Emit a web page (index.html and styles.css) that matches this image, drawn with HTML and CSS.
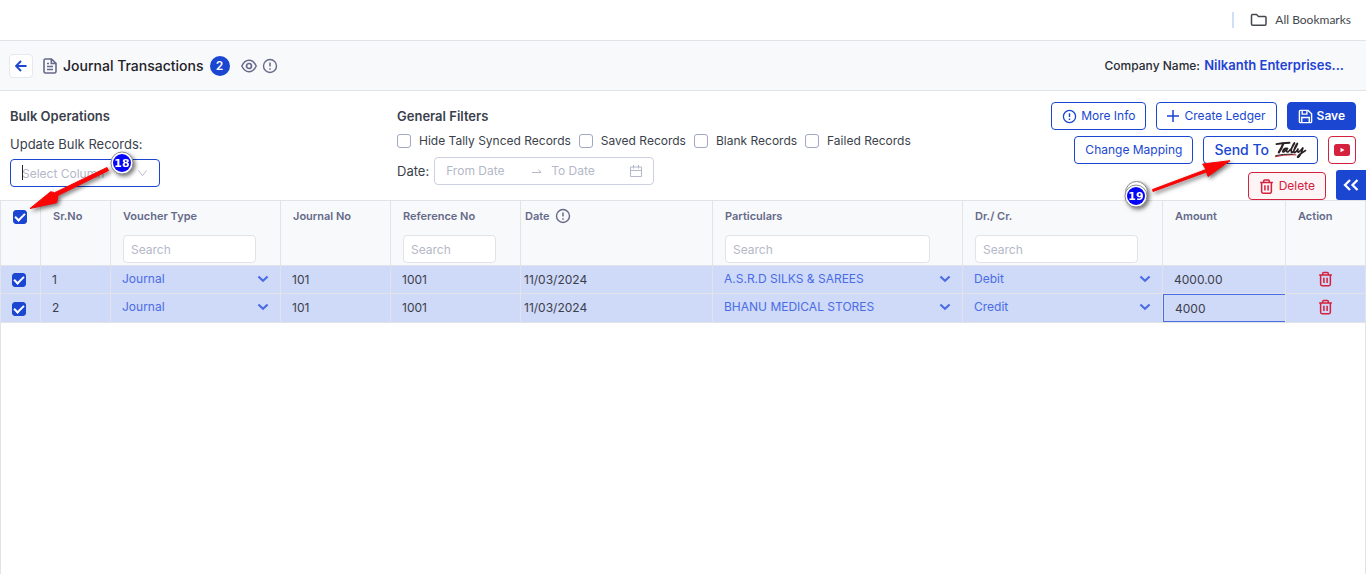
FILE: index.html
```html
<!DOCTYPE html>
<html lang="en">
<head>
<meta charset="utf-8">
<title>Journal Transactions</title>
<link rel="stylesheet" href="styles.css">
</head>
<body>
<svg class="defs" aria-hidden="true">
  <symbol id="alert" viewBox="0 0 16 16"><circle cx="8" cy="8" r="6.5" fill="none" stroke="currentColor" stroke-width="1.4"/><path d="M8 4.6v4M8 10.2v1.5" stroke="currentColor" stroke-width="1.5" fill="none"/></symbol>
  <symbol id="chevron" viewBox="0 0 12 8"><path d="M1.4 1.4 6 5.8l4.600-4.400" fill="none" stroke="currentColor" stroke-width="2.100"/></symbol>
  <symbol id="trash" viewBox="0 0 16 16"><path d="M1.200 3.700h13.600M5 3.500V2.200q0-1.200 1-1.200h4q1 0 1 1.200v1.300M2.800 4v9.600q0 1.500 1.500 1.500h7.400q1.500 0 1.500-1.500V4M6.300 6.600v5.600M9.700 6.600v5.600" fill="none" stroke="currentColor" stroke-width="1.600"/></symbol>
</svg>

<div class="browser-bar">
  <span class="browser-divider"></span>
  <svg class="folder" viewBox="0 0 18 14"><path d="M1.500 11V2.500q0-1 1-1h4l2 2h6.500q1 0 1 1V11q0 1.200-1 1.200H2.500q-1 0-1-1.200Z" fill="none" stroke="currentColor" stroke-width="1.500"/></svg>
  <span>All Bookmarks</span>
</div>

<header class="page-header">
  <button class="back" type="button" aria-label="Back"><svg viewBox="0 0 12 12"><path d="M11.500 6H1.500M6 1 1 6l5 5" fill="none" stroke="currentColor" stroke-width="1.900"/></svg></button>
  <svg class="doc" viewBox="0 0 14 16"><path d="M2.500 1h6L13 5.300v8.200q0 1.500-1.500 1.500h-9Q1 15 1 13.500v-11Q1 1 2.500 1ZM8.300 1v4.500H13M4 5.500h2M4 8.500h6M4 11.500h6" fill="none" stroke="currentColor" stroke-width="1.600"/></svg>
  <h1>Journal Transactions</h1>
  <span class="count">2</span>
  <svg class="eye" viewBox="0 0 16 14"><path d="M.8 7Q3.500 1.300 8 1.300T15.200 7Q12.500 12.700 8 12.700T.8 7Z" fill="none" stroke="currentColor" stroke-width="1.500"/><circle cx="8" cy="7" r="2.500" fill="none" stroke="currentColor" stroke-width="1.700"/></svg>
  <svg class="info"><use href="#alert"/></svg>
  <p class="company">Company Name: <a href="#">Nilkanth Enterprises...</a></p>
</header>

<section class="toolbar">
  <div class="bulk">
    <h2>Bulk Operations</h2>
    <label for="column">Update Bulk Records:</label>
    <div class="combo">
      <input id="column" type="text" role="combobox" placeholder="Select Column">
      <span class="caret"></span>
      <svg viewBox="0 0 12 8"><path d="m1.500 1 4.500 6 4.500-6" fill="none" stroke="currentColor"/></svg>
    </div>
    <svg class="note note-select" viewBox="0 0 112 70">
      <path class="arrow" d="M80.500 20.500 30 45.500 28.700 52.700 2 58.500l20.700-16.800 4 1L79 17.500Z"/>
      <circle class="ring" cx="94" cy="13" r="11"/><circle class="disc" cx="94" cy="13" r="9"/>
      <text x="94" y="17">18</text>
    </svg>
  </div>

  <div class="filters">
    <h2>General Filters</h2>
    <div class="checks">
      <label><input type="checkbox">Hide Tally Synced Records</label>
      <label><input type="checkbox">Saved Records</label>
      <label><input type="checkbox">Blank Records</label>
      <label><input type="checkbox">Failed Records</label>
    </div>
    <div class="date-row">
      <label for="from">Date:</label>
      <div class="range">
        <input id="from" class="from" type="text" placeholder="From Date">
        <svg class="to-arrow" viewBox="0 0 10 6"><path d="M0 4.500h9L6.500 1.500" fill="none" stroke="currentColor"/></svg>
        <input type="text" placeholder="To Date" aria-label="To Date">
        <svg class="calendar" viewBox="0 0 12 12"><path d="M.5 2h11v9.500H.5ZM.5 5.500h11M3.500 0v3.500M8.500 0v3.500" fill="none" stroke="currentColor"/></svg>
      </div>
    </div>
  </div>

  <div class="actions">
    <div class="action-row">
      <button class="btn" type="button"><svg><use href="#alert"/></svg>More Info</button>
      <button class="btn plus" type="button"><svg viewBox="0 0 12 12"><path d="M6 0v12M0 6h12" stroke="currentColor" stroke-width="1.500"/></svg>Create Ledger</button>
      <button class="btn solid" type="button"><svg viewBox="0 0 16 16"><path d="M2.500 1.500h8.300l3.700 3.700v8.300q0 1-1 1h-11q-1 0-1-1v-11q0-1 1-1ZM4.500 1.500v4h5v-4M4 14.500V9h8v5.500" fill="none" stroke="currentColor" stroke-width="1.500"/></svg>Save</button>
    </div>
    <div class="action-row">
      <button class="btn" type="button">Change Mapping</button>
      <button class="btn send" type="button">Send To
        <svg class="tally" viewBox="0 0 34 18" role="img" aria-label="Tally"><g fill="none" stroke="#2b2024" stroke-linecap="round"><path d="M2.500 3Q8 2 16 1.500" stroke-width="1.900"/><path d="M9.500 2.500Q8 7 5 11.500" stroke-width="2.300"/><path d="M14 7.500Q10 6.500 9 10.500q.5 2 4-2.500l1-1q-2.500 4.500.5 4Q18.500 8 21 2.500q.5-2-1 .5-3 6-2 8.500 2 .5 6-8.500.5-2-1 .5-3 5.500-2.500 8 1.500 1 4.500-4-1.500 4.500.5 3.500 2-1 4.500-4.500Q27.500 15 25 16.500q-2 .5 1.500-3l6-4" stroke-width="1.600"/></g><path d="M1 16Q11 13.500 23 14" fill="none" stroke="#c8283c" stroke-width="1.200"/><path d="M1.500 14.800Q9 13 20 13.300" fill="none" stroke="#2b2024"/></svg>
      </button>
      <button class="btn danger video" type="button" aria-label="Video"><svg viewBox="0 0 16 12"><rect width="16" height="12" rx="2.500" fill="currentColor"/><path d="M6.500 3.700v4.600L10.500 6Z" fill="#fff"/></svg></button>
    </div>
    <div class="action-row last">
      <button class="btn danger delete" type="button"><svg><use href="#trash"/></svg>Delete</button>
      <button class="collapse" type="button" aria-label="Collapse"><svg viewBox="0 0 16 12"><path d="M7 1 2 6l5 5M14.500 1l-5 5 5 5" fill="none" stroke="currentColor" stroke-width="2.300"/></svg></button>
    </div>
    <svg class="note note-send" viewBox="0 0 120 60">
      <path class="arrow" d="M33 43.500 86.500 24l1.500 4.500L110 12.700 82.700 16l3.300 5.500L32.500 41.500Z"/>
      <circle class="ring" cx="16.500" cy="44.500" r="11"/>
      <circle class="ring" cx="16" cy="48" r="11"/><circle class="disc" cx="16" cy="48" r="9"/>
      <text x="16" y="52">19</text>
    </svg>
  </div>
</section>

<main class="grid-wrap">
  <table>
    <colgroup>
      <col class="c-check"><col class="c-sr"><col class="c-voucher"><col class="c-journal"><col class="c-ref"><col class="c-date"><col><col class="c-drcr"><col class="c-amount"><col class="c-action">
    </colgroup>
    <thead>
      <tr>
        <th class="pick"><input type="checkbox" checked aria-label="Select all"></th>
        <th>Sr.No</th>
        <th>Voucher Type<input class="search" type="text" placeholder="Search" aria-label="Search voucher type"></th>
        <th>Journal No</th>
        <th>Reference No<input class="search" type="text" placeholder="Search" aria-label="Search reference no"></th>
        <th class="date"><span>Date<svg><use href="#alert"/></svg></span></th>
        <th class="particulars">Particulars<input class="search" type="text" placeholder="Search" aria-label="Search particulars"></th>
        <th>Dr./ Cr.<input class="search" type="text" placeholder="Search" aria-label="Search debit or credit"></th>
        <th>Amount</th>
        <th>Action</th>
      </tr>
    </thead>
    <tbody>
      <tr>
        <td class="pick"><input type="checkbox" checked aria-label="Select row 1"></td>
        <td>1</td>
        <td><div class="cell-select"><select aria-label="Voucher type"><option>Journal</option></select><svg><use href="#chevron"/></svg></div></td>
        <td>101</td>
        <td>1001</td>
        <td class="date">11/03/2024</td>
        <td><div class="cell-select"><select aria-label="Particulars"><option>A.S.R.D SILKS &amp; SAREES</option></select><svg><use href="#chevron"/></svg></div></td>
        <td><div class="cell-select"><select aria-label="Debit or credit"><option>Debit</option></select><svg><use href="#chevron"/></svg></div></td>
        <td>4000.00</td>
        <td class="act"><button type="button" aria-label="Delete row 1"><svg><use href="#trash"/></svg></button></td>
      </tr>
      <tr>
        <td class="pick"><input type="checkbox" checked aria-label="Select row 2"></td>
        <td>2</td>
        <td><div class="cell-select"><select aria-label="Voucher type"><option>Journal</option></select><svg><use href="#chevron"/></svg></div></td>
        <td>101</td>
        <td>1001</td>
        <td class="date">11/03/2024</td>
        <td><div class="cell-select"><select aria-label="Particulars"><option>BHANU MEDICAL STORES</option></select><svg><use href="#chevron"/></svg></div></td>
        <td><div class="cell-select"><select aria-label="Debit or credit"><option>Credit</option></select><svg><use href="#chevron"/></svg></div></td>
        <td class="editing"><input type="text" value="4000" aria-label="Amount"></td>
        <td class="act"><button type="button" aria-label="Delete row 2"><svg><use href="#trash"/></svg></button></td>
      </tr>
    </tbody>
  </table>
</main>
</body>
</html>
```
FILE: styles.css
```css
:root {
  --blue: #1a46d2;
  --red: #d4213d;
  --line: #e1e3e8;
  --pale: #f8f9fb;
  --text: #3b3f4c;
  --muted: #656a89;
  --hint: #b4b8c8;
}
* { box-sizing: border-box; }
body {
  margin: 0;
  min-height: 100vh;
  display: flex;
  flex-direction: column;
  background: #fff;
  color: var(--text);
  font: 12px/20px Inter, "Liberation Sans", sans-serif;
}
button, input, select { font: inherit; color: inherit; }
button { cursor: pointer; }
svg { display: block; flex: none; }
.defs { position: absolute; width: 0; height: 0; }
::placeholder { color: var(--hint); opacity: 1; }

.browser-bar {
  height: 40px;
  display: flex;
  align-items: center;
  justify-content: flex-end;
  padding-right: 15px;
  color: #45484d;
  font: 12px/20px Lato, "Open Sans", sans-serif;
}
.browser-divider { width: 2px; height: 16px; margin-right: 16px; background: #cfdff8; }
.folder { width: 18px; height: 14px; margin-right: 7px; }

.page-header {
  display: flex;
  align-items: center;
  height: 51px;
  padding: 0 22px 0 9px;
  border-top: 1px solid var(--line);
  border-bottom: 1px solid var(--line);
  background: var(--pale);
  color: var(--muted);
}
.back {
  display: grid;
  place-items: center;
  width: 24px;
  height: 24px;
  margin-right: 10px;
  padding: 0;
  border: 1px solid #e6e8ee;
  border-radius: 4px;
  background: #fff;
  color: var(--blue);
}
.back svg { width: 12px; height: 12px; }
.doc { width: 14px; height: 16px; margin-right: 6px; }
h1 { margin: 0; color: #1f2229; font-size: 14px; font-weight: 500; }
.count {
  width: 20px;
  margin: 0 11px 0 6px;
  border-radius: 10px;
  background: var(--blue);
  color: #fff;
  font-weight: 600;
  text-align: center;
}
.eye { width: 16px; height: 14px; margin-right: 5px; }
.info { width: 16px; height: 16px; }
.company { margin: 0 0 0 auto; color: #292c34; font-weight: 500; }
.company a { margin-left: 1px; color: #1f43d3; font-size: 13px; font-weight: 600; text-decoration: none; }

.toolbar {
  display: grid;
  grid-template-columns: 387px 1fr auto;
  padding: 11px 0 0 10px;
}
h2 { margin: 0; font-size: 13px; font-weight: 600; line-height: 28px; }
.bulk { position: relative; }
.bulk label { display: block; font-size: 13px; line-height: 29px; }
.combo { position: relative; width: 150px; }
.combo input {
  display: block;
  width: 100%;
  height: 28px;
  padding: 0 30px 0 11px;
  border: 1px solid var(--blue);
  border-radius: 4px;
  background: #fff;
}
.caret { position: absolute; top: 6px; left: 12px; width: 1px; height: 15px; background: #222; }
.combo svg { position: absolute; top: 10px; right: 12px; width: 11px; height: 8px; color: var(--hint); }

.checks { display: flex; gap: 8px; line-height: 22px; }
.checks label { display: flex; align-items: center; gap: 8px; }
input[type="checkbox"] {
  appearance: none;
  display: block;
  flex: none;
  width: 14px;
  height: 14px;
  margin: 0;
  border: 1px solid #a2a7c4;
  border-radius: 3px;
  background: #fff;
}
input[type="checkbox"]:checked {
  border-color: var(--blue);
  background: var(--blue);
  display: grid;
  place-items: center;
}
input[type="checkbox"]:checked::before {
  content: "";
  width: 4px;
  height: 8px;
  margin-bottom: 2px;
  border: solid #fff;
  border-width: 0 2px 2px 0;
  transform: rotate(45deg);
}
.date-row { display: flex; align-items: center; gap: 5px; margin-top: 5px; }
.date-row label { font-size: 13px; }
.range {
  display: flex;
  align-items: center;
  width: 220px;
  height: 28px;
  padding: 0 11px;
  border: 1px solid #cdd0e0;
  border-radius: 4px;
  color: var(--hint);
}
.range input { min-width: 0; flex: 1; padding: 0; border: 0; background: none; }
.range .from { flex: 0 0 86px; }
.to-arrow { width: 10px; height: 6px; margin-right: 9px; }
.calendar { width: 12px; height: 12px; }

.actions { position: relative; }
.action-row {
  display: flex;
  justify-content: flex-end;
  gap: 10px;
  margin-bottom: 6px;
  padding-right: 10px;
}
.action-row.last { align-items: flex-end; margin: 0; padding: 0; }
.btn {
  display: flex;
  align-items: center;
  height: 28px;
  gap: 4px;
  padding: 0 10px;
  border: 1px solid var(--blue);
  border-radius: 4px;
  background: #fff;
  color: var(--blue);
}
.btn svg { width: 15px; height: 15px; }
.btn.plus { gap: 5px; }
.btn.plus svg { width: 12px; height: 12px; }
.btn.solid { background: var(--blue); color: #fff; font-weight: 600; }
.btn.send { gap: 5px; font-size: 14px; font-weight: 500; }
.btn .tally { width: 33px; height: 18px; }
.btn.danger { border-color: var(--red); color: var(--red); }
.btn.video { width: 28px; padding: 0 5px; }
.btn.video svg { width: 16px; height: 12px; }
.btn.delete { gap: 5px; background: #fdf4f6; }
.collapse {
  display: grid;
  place-items: center;
  width: 30px;
  height: 30px;
  padding: 0;
  border: 0;
  border-radius: 3px 0 0 3px;
  background: var(--blue);
  color: #fff;
}
.collapse svg { width: 16px; height: 12px; }

.note { position: absolute; z-index: 1; pointer-events: none; filter: drop-shadow(2px 2px 2px rgba(0, 0, 0, 0.55)); }
.note-select { top: 48px; left: 18px; width: 112px; height: 70px; }
.note-send { top: 46px; right: 126px; width: 120px; height: 60px; }
.arrow { fill: #fa0505; stroke: #fa0505; stroke-width: 1; }
.ring { fill: #fff; stroke: #8b8b8b; stroke-width: 1; }
.disc { fill: #0505fa; }
.note text { fill: #fff; font: bold 11px "DejaVu Sans", sans-serif; text-anchor: middle; }

.grid-wrap { flex: 1; border: solid var(--line); border-width: 1px 1px 0; }
table { width: 100%; border-collapse: separate; border-spacing: 0; table-layout: fixed; }
.c-check { width: 40px; }
.c-sr { width: 70px; }
.c-voucher { width: 170px; }
.c-journal { width: 110px; }
.c-ref { width: 130px; }
.c-date { width: 192px; }
.c-drcr { width: 200px; }
.c-amount { width: 123px; }
.c-action { width: 79px; }
th, td { border: solid var(--line); border-width: 0 1px 1px 0; text-align: left; }
th:last-child, td:last-child { border-right: 0; }
th {
  height: 65px;
  padding: 5px 24px 2px 12px;
  background: var(--pale);
  color: var(--muted);
  font-size: 11px;
  font-weight: 600;
  vertical-align: top;
  white-space: nowrap;
}
th.date { padding-left: 4px; }
th.date span { display: flex; align-items: center; gap: 5px; }
th.date svg { width: 16px; height: 16px; }
th.particulars { padding-right: 32px; }
th.pick { padding: 9px 12px; }
.search {
  display: block;
  width: 100%;
  height: 28px;
  margin-top: 9px;
  padding: 0 7px;
  border: 1px solid var(--line);
  border-radius: 4px;
  background: #fff;
  font-size: 12px;
  font-weight: 400;
}
td { height: 28px; padding: 0 11px; background: #cfd9f8; }
td.date { padding-left: 3px; }
td.pick { padding: 1px 11px 0; }
.cell-select { display: grid; grid-template-columns: 1fr 12px; align-items: center; padding-bottom: 2px; color: #4a6de5; }
.cell-select select {
  grid-area: 1 / 1 / 2 / 3;
  width: 100%;
  height: 20px;
  padding: 0;
  border: 0;
  appearance: none;
  background: none;
}
.cell-select svg { grid-area: 1 / 2; width: 12px; height: 8px; pointer-events: none; }
td.editing { padding: 0; }
td.editing input {
  display: block;
  width: 100%;
  height: 28px;
  padding: 0 11px;
  border: 1px solid #4a6de5;
  border-right: 0;
  background: none;
}
td.act { padding: 0 0 2px; }
td.act button { display: block; margin: 0 auto; padding: 0; border: 0; background: none; color: var(--red); }
td.act svg { width: 15px; height: 16px; }
```
